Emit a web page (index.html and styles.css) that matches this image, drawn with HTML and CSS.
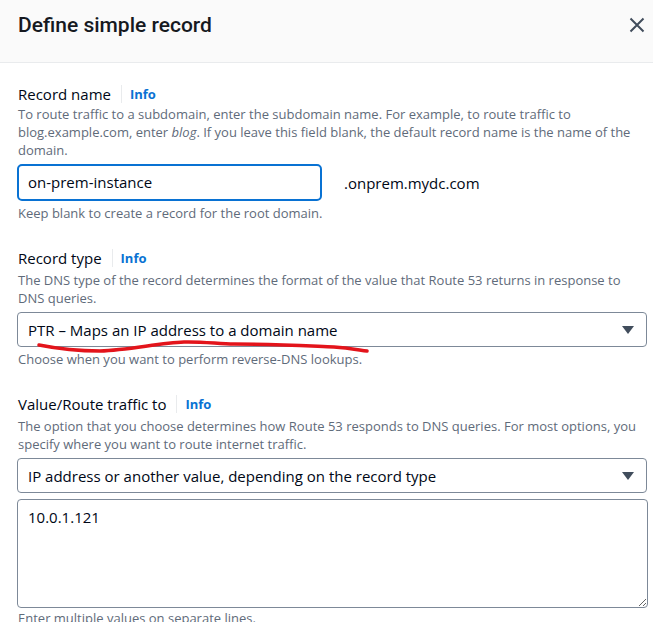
FILE: index.html
```html
<!DOCTYPE html>
<html>
<head>
<meta charset="utf-8">
<link rel="stylesheet" href="styles.css">
</head>
<body>
<div class="modal">
  <div class="header">
    <h1 class="title">Define simple record</h1>
    <button class="close" aria-label="Close">
      <svg width="16" height="16" viewBox="0 0 16 16"><path d="M1.5 1.5 L14.5 14.5 M14.5 1.5 L1.5 14.5" stroke="#414d5c" stroke-width="2" fill="none"/></svg>
    </button>
  </div>
  <div class="body">
    <div class="field">
      <div class="label"><span>Record name</span><span class="divider"></span><a class="info">Info</a></div>
      <div class="desc">To route traffic to a subdomain, enter the subdomain name. For example, to route traffic to blog.example.com, enter <i>blog</i>. If you leave this field blank, the default record name is the name of the domain.</div>
      <div class="name-row">
        <div class="input focused">on-prem-instance</div>
        <div class="suffix">.onprem.mydc.com</div>
      </div>
      <div class="hint">Keep blank to create a record for the root domain.</div>
    </div>

    <div class="field">
      <div class="label"><span>Record type</span><span class="divider"></span><a class="info">Info</a></div>
      <div class="desc">The DNS type of the record determines the format of the value that Route 53 returns in response to DNS queries.</div>
      <div class="select-wrap">
        <div class="select"><span>PTR – Maps an IP address to a domain name</span><span class="caret"></span></div>
        <svg class="scribble" width="345" height="16" viewBox="0 0 345 16"><path d="M5 5 C 25 9, 45 11, 66 11 C 95 10, 125 3, 150 2 C 170 1.5, 185 4, 200 4 C 240 4, 275 6, 300 7 C 315 8, 325 10, 333 11" stroke="#e3141b" stroke-width="3.5" fill="none" stroke-linecap="round" stroke-linejoin="round"/></svg>
      </div>
      <div class="hint">Choose when you want to perform reverse-DNS lookups.</div>
    </div>

    <div class="field">
      <div class="label"><span>Value/Route traffic to</span><span class="divider"></span><a class="info">Info</a></div>
      <div class="desc">The option that you choose determines how Route 53 responds to DNS queries. For most options, you specify where you want to route internet traffic.</div>
      <div class="select"><span>IP address or another value, depending on the record type</span><span class="caret"></span></div>
      <textarea class="textarea">10.0.1.121</textarea>
      <div class="hint tight">Enter multiple values on separate lines.</div>
    </div>
  </div>
</div>
</body>
</html>
```

FILE: styles.css
```css
* { box-sizing: border-box; }
html, body { margin: 0; padding: 0; background: #ffffff; }
body {
  font-family: "Open Sans", "Noto Sans", sans-serif;
  color: #000716;
  width: 653px;
  height: 622px;
  overflow: hidden;
}
.modal { width: 653px; }
.header {
  height: 63px;
  background: #fafafa;
  border-bottom: 1px solid #e9ebed;
  display: flex;
  justify-content: space-between;
  align-items: flex-start;
  padding: 12px 0 0 18px;
}
.title {
  margin: 0;
  font-family: Roboto, "Open Sans", sans-serif;
  font-weight: 500;
  font-size: 21px;
  line-height: 26px;
  color: #16191f;
}
.close {
  border: 0;
  background: transparent;
  padding: 0;
  margin: 5px 8px 0 0;
  width: 16px;
  height: 16px;
  display: flex;
}
.body {
  padding: 21px 6px 0 17px;
}
.field { margin-bottom: 26px; }
.label {
  display: flex;
  align-items: center;
  font-size: 15px;
  line-height: 20px;
  height: 20px;
  padding-left: 1px;
  color: #000716;
}
.divider {
  display: inline-block;
  width: 1px;
  height: 18px;
  background: #e9ebed;
  margin: 0 8px 0 10px;
}
.info {
  color: #0972d3;
  font-weight: 700;
  font-size: 13px;
}
.desc {
  margin-top: 1px;
  font-size: 13px;
  line-height: 18px;
  color: #5f6b7a;
  padding-left: 1px;
  padding-right: 2px;
}
.field + .field .desc { margin-top: 3px; }
.name-row {
  display: flex;
  align-items: center;
  margin-top: 5px;
}
.input {
  width: 305px;
  height: 37px;
  border: 2px solid #0972d3;
  border-radius: 5px;
  padding: 0 9px;
  font-size: 15px;
  line-height: 33px;
  color: #000716;
}
.suffix {
  margin-left: 22px;
  font-size: 15px;
  color: #000716;
}
.hint {
  margin-top: 3px;
  font-size: 13px;
  line-height: 18px;
  color: #5f6b7a;
  padding-left: 1px;
}
.hint.tight { margin-top: 1px; }
.select-wrap { position: relative; }
.select {
  margin-top: 5px;
  width: 630px;
  height: 35px;
  border: 1px solid #7d8998;
  border-radius: 4px;
  padding: 0 12px 0 10px;
  display: flex;
  align-items: center;
  justify-content: space-between;
  font-size: 15px;
  color: #000716;
}
.caret {
  width: 0;
  height: 0;
  border-left: 6px solid transparent;
  border-right: 6px solid transparent;
  border-top: 8px solid #414d5c;
}
.scribble {
  position: absolute;
  left: 17px;
  top: 28px;
}
.textarea {
  display: block;
  margin-top: 6px;
  width: 631px;
  height: 109px;
  border: 1px solid #7d8998;
  border-radius: 4px;
  padding: 7px 10px;
  font-family: "Open Sans", "Noto Sans", sans-serif;
  font-size: 15px;
  line-height: 20px;
  color: #000716;
  resize: both;
  background: #fff;
}
```
